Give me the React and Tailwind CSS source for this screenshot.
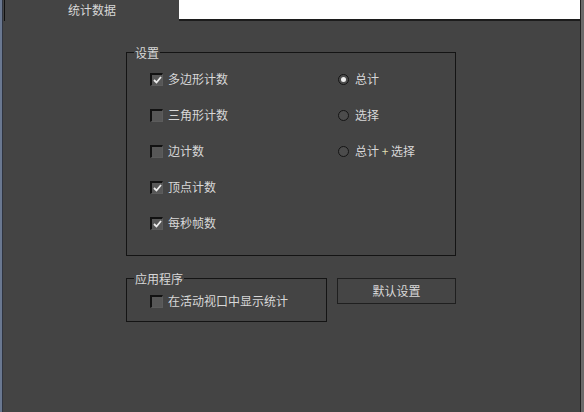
import React from "react";

const Check = ({ checked }) => (
  <span className="w-[13px] h-[13px] shrink-0 flex items-center justify-center border-t-2 border-l-2 border-b border-r border-t-[#121212] border-l-[#121212] border-b-[#5c5c5c] border-r-[#5c5c5c] bg-[#575757]">
    {checked && (
      <svg width="9" height="8" viewBox="0 0 9 8">
        <path d="M1 4 L3.5 6.5 L8 1" fill="none" stroke="#ececec" strokeWidth="1.8" />
      </svg>
    )}
  </span>
);

const Radio = ({ selected }) => (
  <span className="w-[11px] h-[11px] shrink-0 rounded-full border-[1.5px] border-[#151515] bg-[#4c4c4c] flex items-center justify-center">
    {selected && <span className="w-[5px] h-[5px] rounded-full bg-[#efefef]" />}
  </span>
);

const Group = ({ label, className, children }) => (
  <div className={`relative border border-[#141414] ${className}`}>
    <span className="absolute left-[7px] -top-[7px] px-[1px] h-[14px] leading-[14px] bg-[#444444]">
      {label}
    </span>
    {children}
  </div>
);

const options = [
  { label: "多边形计数", checked: true, radio: { text: "总计", selected: true } },
  { label: "三角形计数", checked: false, radio: { text: "选择" } },
  { label: "边计数", checked: false, radio: { text: "总计+选择" } },
  { label: "顶点计数", checked: true },
  { label: "每秒帧数", checked: true },
];

export default function App() {
  return (
    <div className="w-[584px] h-[412px] bg-[#444444] flex overflow-hidden text-[12px] text-[#d8d8d8] font-['Noto_Sans_CJK_SC','Noto_Sans',sans-serif]">
      {/* left frame */}
      <div className="w-[2px] bg-[#6a7891]" />
      <div className="w-[1px] bg-[#2f3440]" />

      <div className="flex-1 flex flex-col">
        {/* tab bar */}
        <div className="h-[21px] flex">
          <div className="w-[1px]" />
          <div className="w-[175px] border-l border-[#111] flex items-center justify-center leading-none pb-[1px]">
            统计数据
          </div>
          <div className="flex-1 bg-white border-b-2 border-[#1c1c1c]" />
        </div>

        {/* body */}
        <div className="pl-[123px] pt-[31px] flex flex-col">
          <Group label="设置" className="w-[330px] h-[204px] pt-[8px] pl-[23px]">
            {options.map((o) => (
              <div key={o.label} className="h-[36px] flex items-center">
                <div className="w-[188px] flex items-center gap-[5px]">
                  <Check checked={o.checked} />
                  <span className="leading-none">{o.label}</span>
                </div>
                {o.radio && (
                  <div className="flex items-center gap-[6px]">
                    <Radio selected={o.radio.selected} />
                    {o.radio.text === "总计+选择" ? (
                      <span className="leading-none">
                        总计 <span className="text-[#dedcb0]">+</span> 选择
                      </span>
                    ) : (
                      <span className="leading-none">{o.radio.text}</span>
                    )}
                  </div>
                )}
              </div>
            ))}
          </Group>

          <div className="mt-[22px] flex items-start gap-[10px]">
            <Group label="应用程序" className="w-[201px] h-[44px] pt-[12px] pl-[23px]">
              <div className="h-[20px] flex items-center gap-[5px]">
                <Check checked={false} />
                <span className="leading-none">在活动视口中显示统计</span>
              </div>
            </Group>
            <button className="w-[119px] h-[26px] border border-[#1f1f1f] bg-[#454545] flex items-center justify-center leading-none text-[#d8d8d8]">
              默认设置
            </button>
          </div>
        </div>
      </div>

      {/* right frame */}
      <div className="w-[1px] bg-[#222]" />
      <div className="w-[3px] bg-[#6a6a6a]" />
    </div>
  );
}
